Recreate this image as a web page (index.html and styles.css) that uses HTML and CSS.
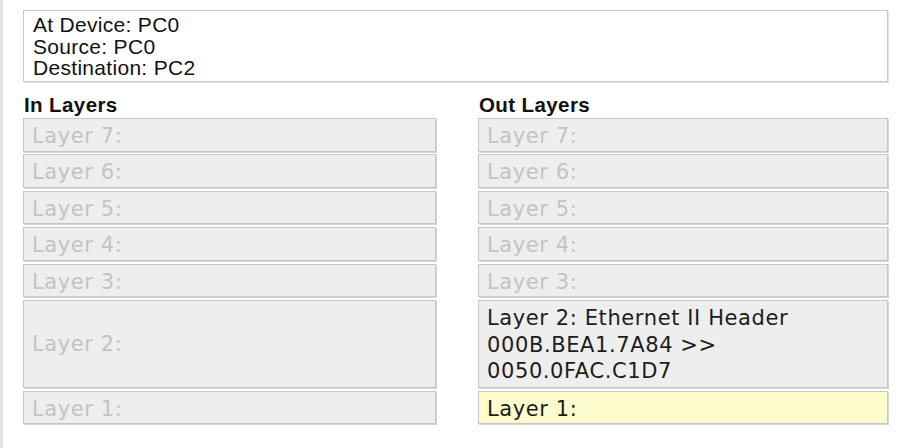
FILE: index.html
```html
<!DOCTYPE html>
<html>
<head>
<meta charset="utf-8">
<link rel="stylesheet" href="styles.css">
</head>
<body>
<div class="page">
  <div class="info">
    <div>At Device: PC0</div>
    <div>Source: PC0</div>
    <div>Destination: PC2</div>
  </div>
  <div class="columns">
    <div class="col">
      <div class="heading">In Layers</div>
      <div class="layers">
        <div class="layer">Layer 7:</div>
        <div class="layer">Layer 6:</div>
        <div class="layer">Layer 5:</div>
        <div class="layer">Layer 4:</div>
        <div class="layer">Layer 3:</div>
        <div class="layer tall center">Layer 2:</div>
        <div class="layer">Layer 1:</div>
      </div>
    </div>
    <div class="col">
      <div class="heading">Out Layers</div>
      <div class="layers">
        <div class="layer">Layer 7:</div>
        <div class="layer">Layer 6:</div>
        <div class="layer">Layer 5:</div>
        <div class="layer">Layer 4:</div>
        <div class="layer">Layer 3:</div>
        <div class="layer tall active">Layer 2: Ethernet II Header<br>000B.BEA1.7A84 &gt;&gt;<br>0050.0FAC.C1D7</div>
        <div class="layer active current">Layer 1:</div>
      </div>
    </div>
  </div>
</div>
</body>
</html>
```
FILE: styles.css
```css
html, body {
  margin: 0;
  padding: 0;
  background: #ffffff;
}
body {
  width: 902px;
  height: 448px;
  overflow: hidden;
}
.page {
  box-sizing: border-box;
  height: 448px;
  border-left: 3px solid #e4e4e4;
  padding: 10px 14px 0 20px;
}
.info {
  box-sizing: border-box;
  width: 865px;
  height: 72px;
  border: 1px solid #c9c9c9;
  box-shadow: 1px 1px 0 #e2e2e2;
  padding: 3px 8px 2px 9px;
  font-family: "Liberation Sans", Arial, sans-serif;
  font-size: 21px;
  letter-spacing: 0.3px;
  line-height: 21.7px;
  color: #111111;
}
.columns {
  width: 865px;
  display: grid;
  grid-template-columns: 413px 410px;
  column-gap: 42px;
}
.heading {
  margin-top: 12px;
  margin-bottom: 2px;
  font-family: "Liberation Sans", Arial, sans-serif;
  font-weight: bold;
  font-size: 20.5px;
  letter-spacing: 0.4px;
  line-height: 22px;
  color: #111111;
  padding-left: 1px;
}
.layers {
  display: flex;
  flex-direction: column;
  gap: 2.7px;
}
.layer {
  box-sizing: border-box;
  height: 33.7px;
  background: #eeeeee;
  border: 1px solid #c6c6c6;
  box-shadow: 1px 1px 0 #d6d6d6;
  padding: 4px 8px 1px 8px;
  font-family: "DejaVu Sans", Verdana, sans-serif;
  font-size: 21px;
  letter-spacing: 0.6px;
  line-height: 26.7px;
  color: #c3c3c3;
  white-space: nowrap;
}
.layer.tall {
  height: 88px;
}
.layer.center {
  display: flex;
  align-items: center;
  padding-top: 0;
  padding-bottom: 0;
}
.layer.active {
  color: #1c1c1c;
}
.layer.current {
  background: #fcfccc;
}
```
